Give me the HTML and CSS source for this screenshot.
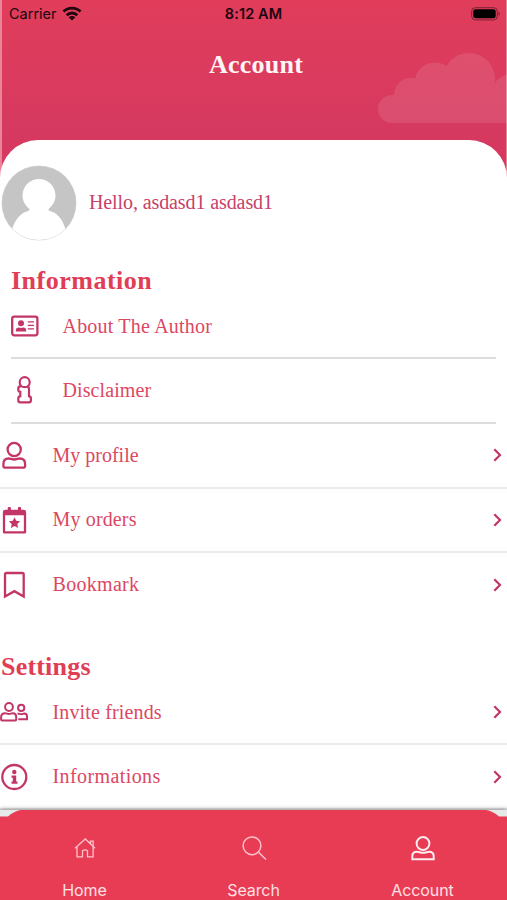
FILE: index.html
```html
<!DOCTYPE html>
<html lang="en">
<head>
<meta charset="UTF-8">
<title>Account</title>
<link rel="stylesheet" href="styles.css">
</head>
<body>
<div class="phone">

<!-- Header -->
<header class="header">
  <div class="status">
    <span class="carrier">Carrier
      <svg width="20" height="15" viewBox="0 0 20 15" fill="none" stroke="currentColor" stroke-width="2.8"><path d="M1.500 5.600a12 12 0 0 1 17 0M4.700 9.200a7.500 7.500 0 0 1 10.600 0"/><path d="M6.700 11.300a4.700 4.700 0 0 1 6.600 0L10 14.600z" fill="currentColor" stroke="none"/></svg>
    </span>
    <span class="clock">8:12 AM</span>
    <svg class="battery" width="30" height="14" viewBox="0 0 30 14"><rect x=".7" y=".7" width="25.6" height="12.2" rx="3.6" fill="none" stroke="#000" stroke-opacity=".45"/><rect x="2.3" y="2.3" width="22.4" height="9" rx="2.2"/><path d="M27.6 4.6q2.4 2.2 0 4.4z" opacity=".5"/></svg>
  </div>
  <h1>Account</h1>
  <svg class="cloud" width="130" height="72" viewBox="0 0 130 72"><g fill="#fff" opacity=".1"><circle cx="15" cy="57" r="14"/><circle cx="34" cy="43" r="17"/><circle cx="58" cy="31" r="20.500"/><circle cx="92" cy="27" r="26"/><circle cx="135" cy="43" r="21"/><path d="M15 45 34 38 58 30h34l23 8 15 10v23H15z"/></g></svg>
</header>

<main class="sheet">
  <div class="user">
    <svg width="76" height="76" viewBox="0 0 76 76"><defs><clipPath id="av"><circle cx="38" cy="38" r="37"/></clipPath></defs><circle cx="38" cy="38" r="37.5" fill="#ddd"/><g clip-path="url(#av)"><path d="M0 0h76v76H0z" fill="#c5c5c5"/><path d="M11 64c4-11 9-16 16-18 1.500-.8 2-1.500 1-2.500C24 40 21.500 36 21.500 30.500a16.500 16.500 0 0 1 33 0C54.500 36 52 40 48 43.500c-1 1-.5 1.700 1 2.500 7 2 12 7 15.500 18v12H11z" fill="#fff"/></g></svg>
    <span class="hello">Hello, asdasd1 asdasd1</span>
  </div>

  <!-- Information -->
  <section class="inset">
    <h2 class="info-title">Information</h2>
    <div class="row">
      <svg class="icon" viewBox="0 0 28 28"><rect x="1.200" y="4.700" width="25.200" height="18.600" rx="2" fill="none" stroke="currentColor" stroke-width="2.300"/><circle cx="10" cy="11.200" r="3" fill="currentColor"/><path d="M4.800 19.500v-1q0-2.900 3-2.900l2.200.5 2.200-.5q3 0 3 2.900v1zM16.800 9.200h6.200v1.400h-6.200zM16.800 12.700h6.200v1.400h-6.200zM16.800 16.200h6.200v1.400h-6.200z" fill="currentColor"/></svg>
      <span class="label about">About The Author</span>
    </div>
    <div class="row">
      <svg class="icon" viewBox="0 0 28 28" fill="none" stroke="currentColor" stroke-width="2.200"><circle cx="13.700" cy="6.200" r="5"/><path d="M10.500 10.300H9.300q-2 0-2 2.200v1.200q0 2 2 2.200v4.300q-2 .3-2 2.300v1.700q0 2.200 2 2.200h8.600q2 0 2-2.200v-1.700q0-2-1.900-2.300v-6.900q0-2.400-1.800-2.900"/></svg>
      <span class="label disclaimer">Disclaimer</span>
    </div>
  </section>

  <section>
    <div class="row">
      <svg class="icon" viewBox="0 0 28 28" fill="none" stroke="currentColor" stroke-width="2.300"><circle cx="14.200" cy="8.500" r="6.600"/><path d="M8.500 17.500c2.300 0 2.800 1 5.700 1s3.400-1 5.700-1c3.300 0 5.200 2.300 5.200 5.600v1.600q0 2-2 2H5.400q-2 0-2-2v-1.600c0-3.300 1.900-5.600 5.100-5.600z"/></svg>
      <span class="label profile">My profile</span>
      <svg class="arrow" viewBox="0 0 9 14"><path d="M1.300 1.300 7 7l-5.700 5.700"/></svg>
    </div>
    <div class="row">
      <svg class="icon" viewBox="0 0 28 28"><path d="M4 8h21v18.300H4z" fill="none" stroke="currentColor" stroke-width="2.300" stroke-linejoin="round"/><path d="M2.900 9V6q0-2.200 2.200-2.200h2.600V2q0-1 1-1h1.200q1 0 1 1v1.800h7V2q0-1 1-1h1.200q1 0 1 1v1.800h2.700q2.300 0 2.300 2.200v3zM14.500 11.200l1.700 3.500 3.900.6-2.800 2.700.7 3.900-3.500-1.800-3.500 1.800.7-3.900-2.800-2.700 3.900-.6z" fill="currentColor"/></svg>
      <span class="label orders">My orders</span>
      <svg class="arrow" viewBox="0 0 9 14"><path d="M1.300 1.300 7 7l-5.700 5.700"/></svg>
    </div>
    <div class="row last">
      <svg class="icon" viewBox="0 0 28 28" fill="none" stroke="currentColor" stroke-width="2.300"><path d="M5 25.600V3.600q0-1.600 1.600-1.600h15.500q1.600 0 1.600 1.600v22l-9.350-5.400z"/></svg>
      <span class="label bookmark">Bookmark</span>
      <svg class="arrow" viewBox="0 0 9 14"><path d="M1.300 1.300 7 7l-5.700 5.700"/></svg>
    </div>
  </section>

  <!-- Settings -->
  <section>
    <h2 class="settings-title">Settings</h2>
    <div class="row">
      <svg class="icon" viewBox="0 0 28 28" fill="none" stroke="currentColor" stroke-width="2"><circle cx="9" cy="9" r="3.900"/><circle cx="21.200" cy="9.900" r="3.100"/><path d="M5.200 15.300c1.800 0 2 .7 3.800.7s2-.7 3.800-.7q3.400 0 3.400 3.900v2.200q0 1-1 1H2.100q-1 0-1-1v-2.200q0-3.900 4.100-3.900zM17.500 15.800c1.800-.6 2 .4 3.700.4 1.500 0 1.700-.6 3.100-.6q2.700.1 2.700 3v2.600h-8.700"/></svg>
      <span class="label invite">Invite friends</span>
      <svg class="arrow" viewBox="0 0 9 14"><path d="M1.300 1.300 7 7l-5.700 5.700"/></svg>
    </div>
    <div class="row">
      <svg class="icon" viewBox="0 0 28 28"><circle cx="14.300" cy="14" r="12" fill="none" stroke="currentColor" stroke-width="2.300"/><circle cx="14.300" cy="9" r="2.200" fill="currentColor"/><path d="M11.500 12.500h4.700v6h1.300v2.300h-6v-2.300h1.300v-3.700h-1.300z" fill="currentColor"/></svg>
      <span class="label informations">Informations</span>
      <svg class="arrow" viewBox="0 0 9 14"><path d="M1.300 1.300 7 7l-5.700 5.700"/></svg>
    </div>
  </section>
</main>

<!-- Tab bar -->
<nav class="tabs">
  <svg class="tabs-top" width="507" height="8" viewBox="0 0 507 8"><path d="M0 0h507v8H0z" fill="#e5e9e8"/><path d="M0 6.500h8Q14 1 21 0h465q7 1 13 6.500h8V8H0z" fill="#e83c55"/></svg>
  <a class="tab">
    <svg width="26" height="26" viewBox="0 0 26 26" fill="none" stroke="currentColor" stroke-width="1.300"><path d="M3 13.300 13.300 4l9.700 9.300M18.500 8.800V6.200h2.700v5.400M5 12v9.800h5.500v-6q2.500-2 5 0v6h5.600V12"/></svg>
    <span>Home</span>
  </a>
  <a class="tab">
    <svg width="26" height="26" viewBox="0 0 26 26" fill="none" stroke="currentColor" stroke-width="1.500"><circle cx="11" cy="10.800" r="8.900"/><path d="m17.500 17.200 7.500 7.300"/></svg>
    <span>Search</span>
  </a>
  <a class="tab active">
    <svg width="26" height="26" viewBox="0 0 26 26" fill="none" stroke="currentColor" stroke-width="2"><circle cx="13" cy="8.500" r="6.400"/><path d="M2.300 24.300v-3q0-4.500 4.500-4.500c2.500 0 3 1 6.200 1s3.700-1 6.200-1q4.500 0 4.500 4.500v3z"/></svg>
    <span>Account</span>
  </a>
</nav>

</div>
</body>
</html>
```

FILE: styles.css
```css
:root{--red:#e83c55;--text:#dc4763;--icon:#c33568}
*{box-sizing:border-box}
body{margin:0;background:#fff;font-family:"Liberation Serif",serif}
svg{display:block;flex:none}
.phone{
  position:relative;width:507px;height:900px;
  overflow:hidden;display:flex;flex-direction:column}

/* header */
.header{
  position:relative;flex:none;height:180px;
  background:linear-gradient(#e13d5b,#d53960 140px);
  border-left:2px solid #e98499;border-right:1px solid #e98499}
.status{
  display:grid;grid-template-columns:1fr auto 1fr;align-items:center;
  height:27px;padding:0 5px 0 7px;
  font:14.500px Inter,sans-serif;color:#21060e}
.carrier{display:flex;align-items:center;gap:5px}
.clock{font-weight:600;font-size:14.5px;letter-spacing:.1px;margin-left:-3px}
.battery{justify-self:end}
h1{
  margin:24px 0 0 4px;text-align:center;color:#fff5f5;
  font-size:26px;line-height:28px;letter-spacing:.25px}
.cloud{position:absolute;right:-1px;top:52px}

/* white sheet */
.sheet{
  position:relative;flex:none;height:670px;margin-top:-40px;
  padding-top:24px;background:#fff;border-radius:38px 38px 0 0}
.user{display:flex;align-items:center;gap:12px;padding-left:1px;height:77px}
.hello{font-size:20px;color:#c84168;letter-spacing:-.1px}
h2{margin:0;color:#e13d55;font-size:26px;line-height:32px}
.inset{padding:0 11px}
.info-title{margin-top:24px;letter-spacing:.5px}
.settings-title{padding:33px 0 0 1px;letter-spacing:.2px}
.row{
  display:flex;align-items:center;height:64.8px;
  padding-right:5px;border-bottom:2px solid #ebebeb}
.inset .row{border-color:#ddd}
h2 + .row{height:62px;padding-bottom:2px}
.row.last{border-color:transparent}
.icon{width:28px;height:28px;color:var(--icon)}
.label{margin-left:24.500px;font-size:20px;color:var(--text)}
.inset .label{margin-left:23.500px}
.arrow{
  width:9px;height:14px;margin-left:auto;
  fill:none;stroke:var(--icon);stroke-width:2.2}
.about{letter-spacing:.2px}
.disclaimer{letter-spacing:.1px}
.profile{letter-spacing:0}
.orders{letter-spacing:.15px}
.bookmark{letter-spacing:.3px}
.invite{letter-spacing:.15px}
.informations{letter-spacing:.4px}

/* tab bar */
.tabs{
  position:absolute;left:0;bottom:0;width:507px;height:90px;
  display:flex;background:var(--red);box-shadow:0 -1px 4px rgba(0,0,0,.4)}
.tabs-top{position:absolute;left:0;top:0}
.tab{
  flex:1;display:flex;flex-direction:column;align-items:center;
  padding-top:25px;gap:19px;color:#ffc3cb;
  font:16px/20px Inter,sans-serif;letter-spacing:-.1px}
.tab span{color:#ffe0e3}
.tab.active{color:#ffecee}
```
